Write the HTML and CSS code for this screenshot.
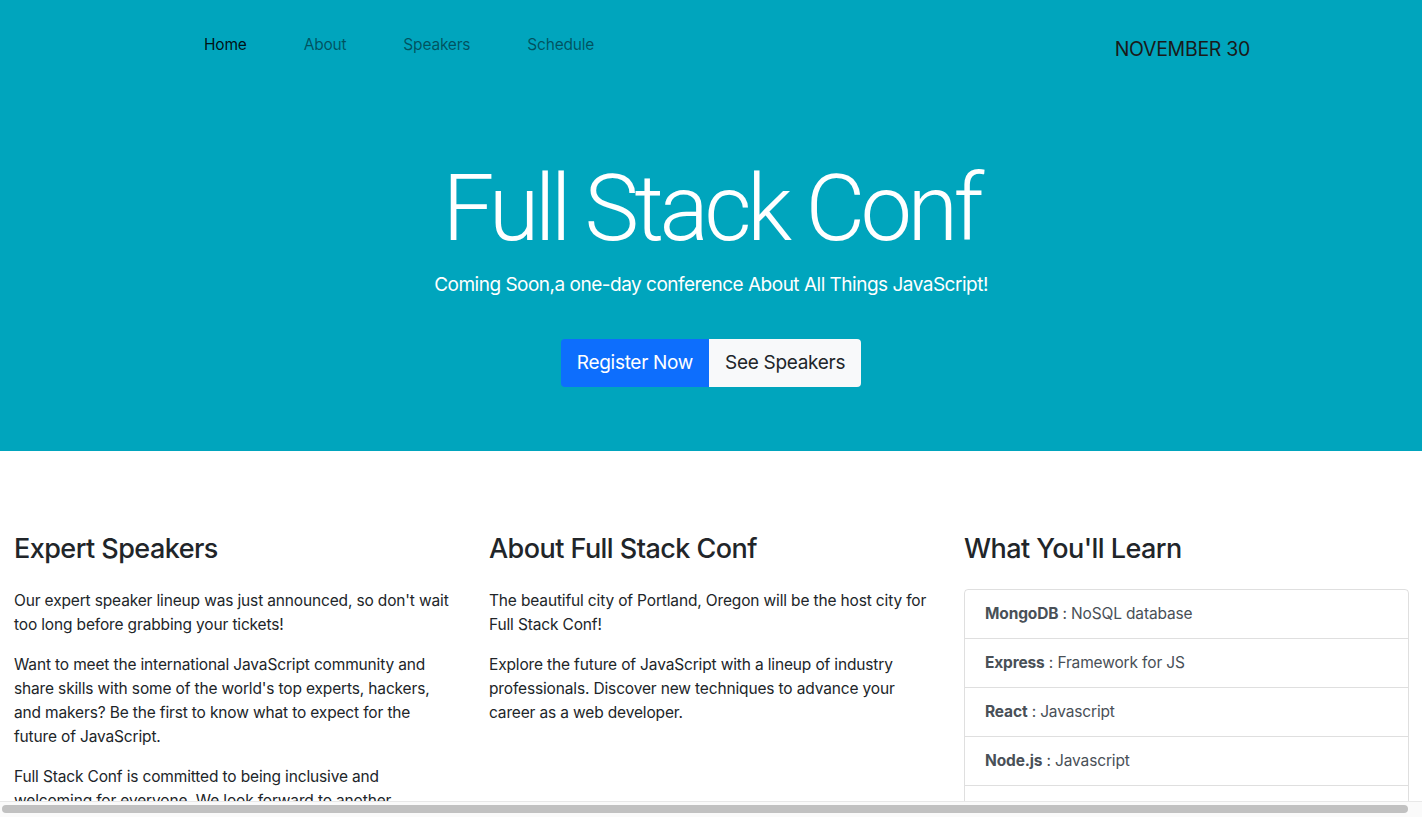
FILE: index.html
```html
<!DOCTYPE html>
<html lang="en">
<head>
<meta charset="utf-8">
<title>Full Stack Conf</title>
<link rel="stylesheet" href="styles.css">
</head>
<body>
<header class="hero">
  <div class="topbar">
    <nav class="nav">
      <a class="nav-link active" href="#">Home</a>
      <a class="nav-link" href="#">About</a>
      <a class="nav-link" href="#">Speakers</a>
      <a class="nav-link" href="#">Schedule</a>
    </nav>
    <div class="date">NOVEMBER 30</div>
  </div>
  <div class="hero-body">
    <h1 class="title">Full Stack Conf</h1>
    <p class="lead">Coming Soon,a one-day conference About All Things JavaScript!</p>
    <div class="btn-group">
      <a class="btn btn-primary" href="#">Register Now</a>
      <a class="btn btn-light" href="#">See Speakers</a>
    </div>
  </div>
</header>
<main class="content">
  <section class="col">
    <h3>Expert Speakers</h3>
    <p>Our expert speaker lineup was just announced, so don't wait too long before grabbing your tickets!</p>
    <p>Want to meet the international JavaScript community and share skills with some of the world's top experts, hackers, and makers? Be the first to know what to expect for the future of JavaScript.</p>
    <p>Full Stack Conf is committed to being inclusive and welcoming for everyone. We look forward to another intellectual and fun conference.</p>
  </section>
  <section class="col">
    <h3>About Full Stack Conf</h3>
    <p>The beautiful city of Portland, Oregon will be the host city for Full Stack Conf!</p>
    <p>Explore the future of JavaScript with a lineup of industry professionals. Discover new techniques to advance your career as a web developer.</p>
  </section>
  <section class="col">
    <h3>What You'll Learn</h3>
    <ul class="list-group">
      <li class="list-item"><strong>MongoDB</strong> : NoSQL database</li>
      <li class="list-item"><strong>Express</strong> : Framework for JS</li>
      <li class="list-item"><strong>React</strong> : Javascript</li>
      <li class="list-item"><strong>Node.js</strong> : Javascript</li>
      <li class="list-item"><strong>Git</strong> : Version control</li>
    </ul>
  </section>
</main>
<div class="hscroll"><div class="hscroll-thumb"></div></div>
</body>
</html>
```

FILE: styles.css
```css
* { box-sizing: border-box; }
html, body { margin: 0; padding: 0; }
body {
  font-family: Inter, "Noto Sans", "Liberation Sans", sans-serif;
  font-size: 16px;
  line-height: 1.5;
  color: #212529;
  background: #fff;
  overflow: hidden;
  height: 817px;
}
.hero {
  background: #00a5bd;
  height: 451px;
}
.topbar {
  display: flex;
  align-items: center;
  padding: 25px 172px 0 204px;
}
.nav { display: flex; gap: 57px; }
.nav-link {
  color: rgba(0, 0, 0, 0.5);
  text-decoration: none;
  font-size: 15.5px;
  letter-spacing: -0.2px;
  line-height: 24px;
}
.nav-link.active { color: rgba(0, 0, 0, 0.9); }
.date {
  margin-left: auto;
  font-size: 19.5px;
  letter-spacing: -0.3px;
  line-height: 30px;
  color: #1a1a1a;
  margin-top: 9px;
}
.hero-body {
  display: flex;
  flex-direction: column;
  align-items: center;
  color: #fff;
  padding-top: 90px;
}
.title {
  margin: 0;
  font-family: Roboto, Inter, sans-serif;
  font-size: 92px;
  font-weight: 300;
  line-height: 1.2;
  letter-spacing: -4.6px;
}
.lead {
  margin: 6px 0 0;
  font-size: 19px;
  font-weight: 400;
  letter-spacing: -0.5px;
  line-height: 30px;
}
.btn-group {
  display: flex;
  margin-top: 39px;
}
.btn {
  display: block;
  height: 48px;
  padding: 0 16px;
  font-size: 19px;
  letter-spacing: -0.3px;
  line-height: 48px;
  text-decoration: none;
}
.btn-primary {
  background: #0d6efd;
  color: #fff;
  border-radius: 4px 0 0 4px;
}
.btn-light {
  background: #f8f9fa;
  color: #212529;
  border-radius: 0 4px 4px 0;
}
.content {
  display: grid;
  grid-template-columns: 445px 445px 445px;
  column-gap: 30px;
  padding: 82px 0 0 14px;
}
.col h3 {
  margin: 0 0 24px;
  font-size: 27px;
  font-weight: 500;
  line-height: 1.2;
  letter-spacing: -0.55px;
}
.col p {
  margin: 0 0 16px;
  max-width: 441px;
  font-size: 15.5px;
  letter-spacing: -0.15px;
  line-height: 24px;
}
.list-group {
  list-style: none;
  margin: 0;
  padding: 0;
  border: 1px solid rgba(0, 0, 0, 0.125);
  border-radius: 4px;
}
.list-item {
  padding: 12px 20px;
  font-size: 15.5px;
  letter-spacing: -0.15px;
  line-height: 24px;
  color: #495057;
  border-bottom: 1px solid rgba(0, 0, 0, 0.125);
}
.list-item strong { font-weight: 700; }
.hscroll {
  position: fixed;
  left: 0;
  right: 0;
  bottom: 0;
  height: 16px;
  background: #fafafa;
  border-top: 1px solid #e8e8e8;
  padding: 3px 14px 3px 2px;
}
.hscroll-thumb {
  height: 8px;
  background: #c1c1c1;
  border-radius: 4px;
}
```
